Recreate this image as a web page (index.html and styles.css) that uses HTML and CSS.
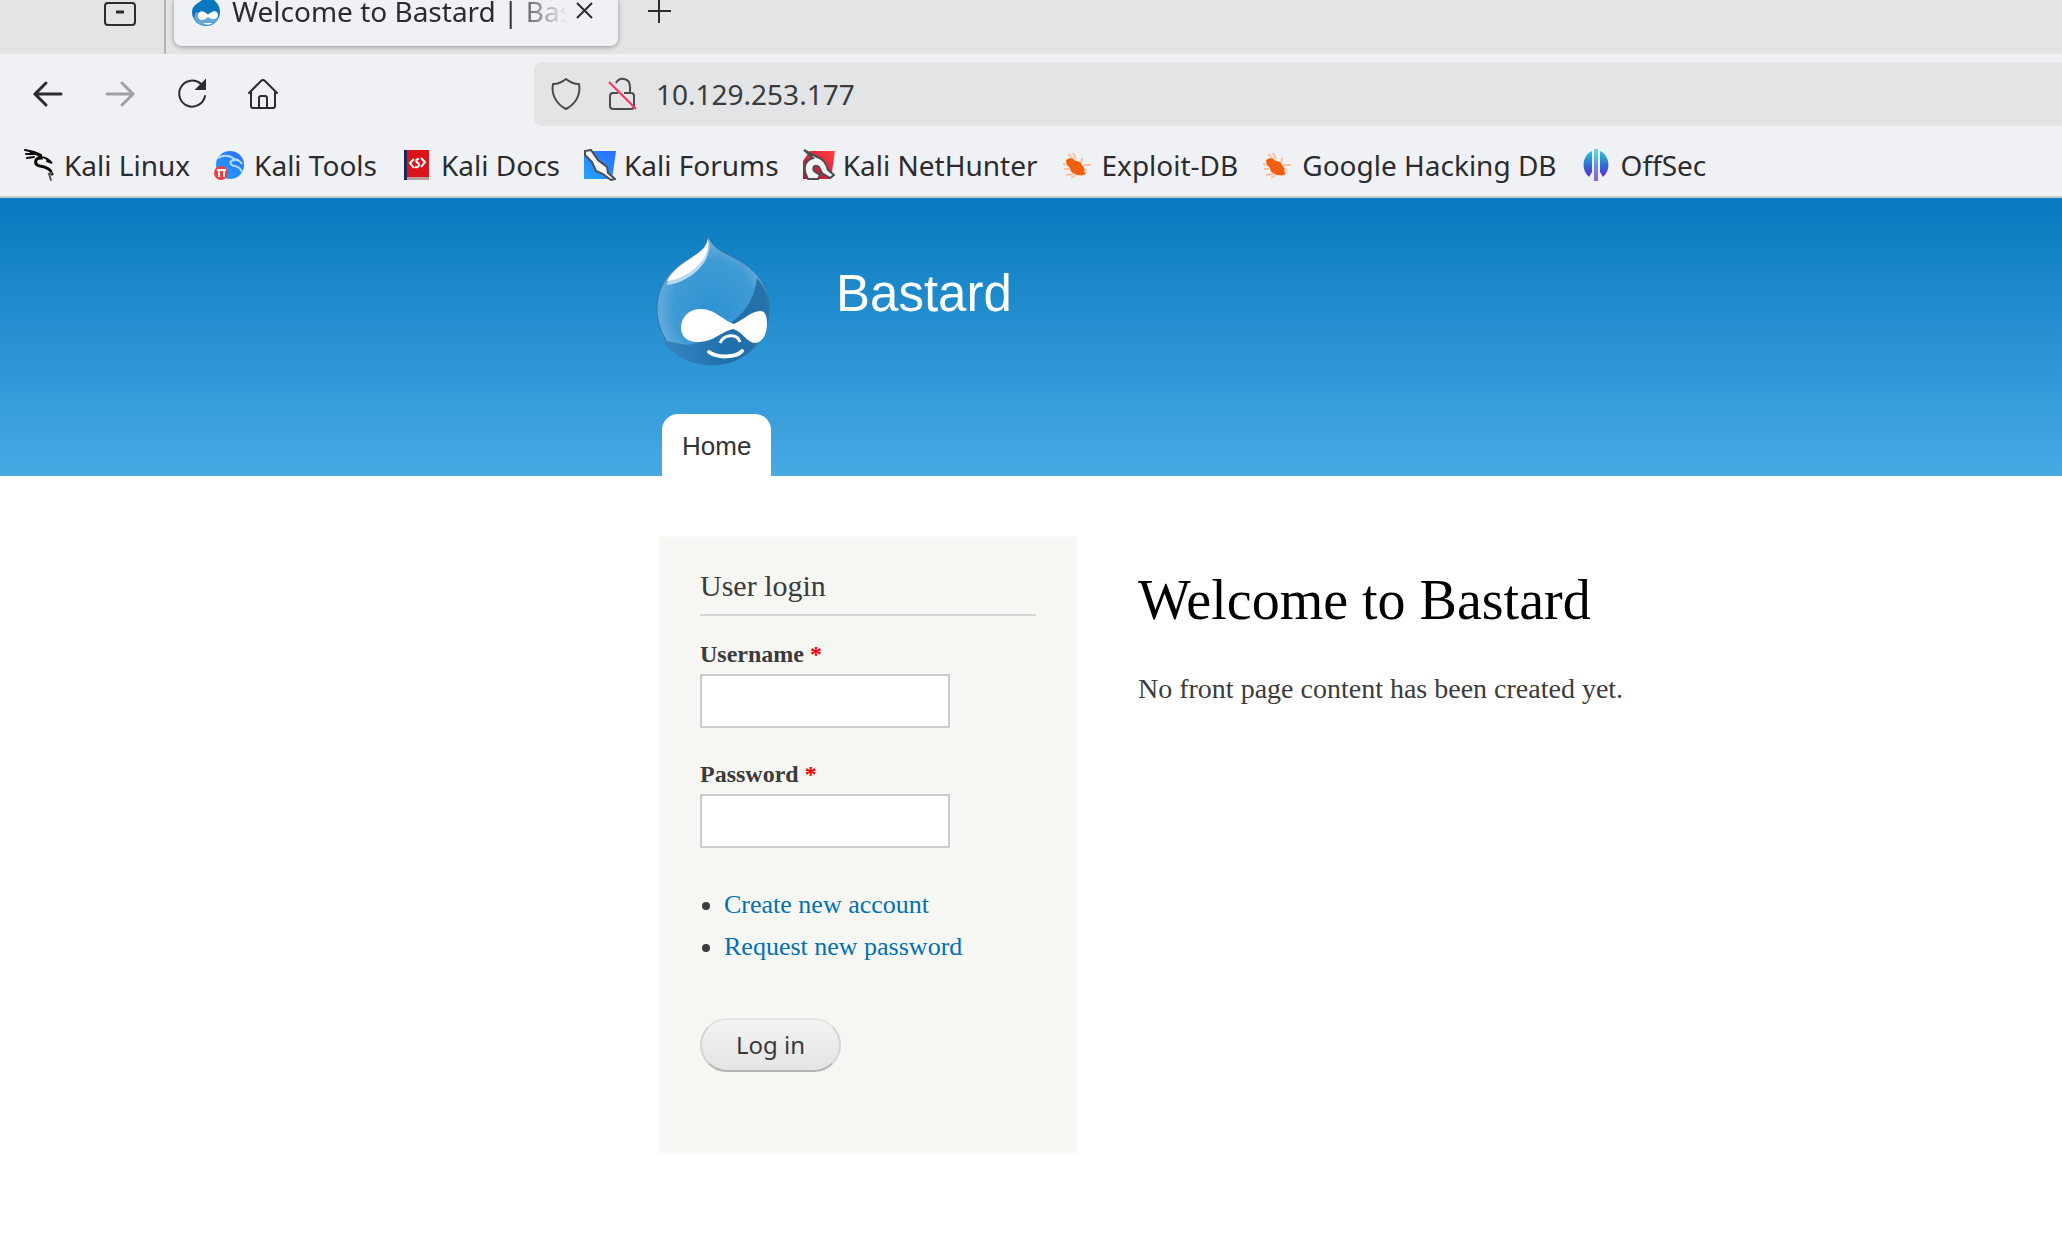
FILE: index.html
```html
<!DOCTYPE html>
<html lang="en">
<head>
<meta charset="utf-8">
<title>Welcome to Bastard | Bastard</title>
<link rel="stylesheet" href="styles.css">
</head>
<body>
<svg class="defs" aria-hidden="true">
  <defs>
    <linearGradient id="offsec" gradientUnits="userSpaceOnUse" x1="0" y1="0" x2="0" y2="32"><stop offset="0" stop-color="#25d3dc"/><stop offset=".5" stop-color="#2f6fd2"/><stop offset="1" stop-color="#6a17d6"/></linearGradient>
    <linearGradient id="blue" x1="1" y1="0" x2="0" y2="1"><stop offset="0" stop-color="#2a6cff"/><stop offset="1" stop-color="#23a4ff"/></linearGradient>
    <linearGradient id="red" x1="1" y1="0" x2="0" y2="1"><stop offset="0" stop-color="#ff4040"/><stop offset="1" stop-color="#b50d3c"/></linearGradient>
    <radialGradient id="drop" cx=".5" cy=".55" r=".55"><stop offset="0" stop-color="#2f93d3"/><stop offset=".65" stop-color="#3f9ad4"/><stop offset="1" stop-color="#72b3e0"/></radialGradient>
    <linearGradient id="shade" x1="0" y1="0" x2="1" y2="0"><stop offset="0" stop-color="#3687c2"/><stop offset=".6" stop-color="#1f6fac"/><stop offset="1" stop-color="#2872a9"/></linearGradient>
    <symbol id="bug" viewBox="0 0 32 32">
      <path d="M6 5l5 5M11 4l3 6M1 15l5 1M20 9l-1 5M29 16l-7 0M21 20l4 2M4 26l8-1M9 29l5-3M19 25l2 2M2 20l5 0" stroke="#f9c3a2" stroke-width="2" fill="none"/>
      <path d="M4 11c4-3 7-2 10 1 3 0 5 1 6 4 2 2 3 4 2 6l2 3-3 1c-3 0-5 1-8-1-3-1-5-3-5-6-2-2-4-4-4-8z" fill="#f2600f"/>
    </symbol>
  </defs>
</svg>

<div class="browser">
  <div class="tabstrip">
    <button class="icon-button archive" aria-label="Open tabs"><svg width="34" height="26" viewBox="0 0 34 26" fill="none" stroke="#2b2c30" stroke-width="2"><rect x="3" y="3" width="30" height="22" rx="3"/><path d="M14 12h8" stroke-width="3"/></svg></button>
    <div class="tab">
      <svg class="favicon" width="30" height="34" viewBox="0 0 30 34"><path d="M16 0c1 4 12 7 12 18a14 14 0 0 1-28 0C0 9 13 7 16 0z" fill="#0877bf"/><path d="M2 24c4 10 20 10 24 0l-3-7-9 4-10-3z" fill="#63a9d6"/><path d="M6 22c0-6 6-6 10-1 4-5 10-5 10 0 0 5-6 5-10 2-4 4-10 4-10-1zM11 29c4 2 7 2 9 0z" fill="#fff"/></svg>
      <span class="tab-title">Welcome to Bastard | Bastard</span>
      <button class="icon-button" aria-label="Close tab"><svg width="18" height="18" viewBox="0 0 18 18" stroke="#2b2c30" stroke-width="2"><path d="M1 1l15 15M16 1L1 16"/></svg></button>
    </div>
    <button class="icon-button new-tab" aria-label="New tab"><svg width="24" height="24" viewBox="0 0 24 24" stroke="#2b2c30" stroke-width="2"><path d="M11 0v23M0 11h23"/></svg></button>
  </div>

  <div class="toolbar">
    <div class="nav">
      <button class="icon-button" aria-label="Back"><svg width="32" height="32" viewBox="0 0 32 32" fill="none" stroke="#2b2c30" stroke-width="3" stroke-linecap="round"><path d="M14 5L3 16l11 11M3 16h26"/></svg></button>
      <button class="icon-button" aria-label="Forward" disabled><svg width="32" height="32" viewBox="0 0 32 32" fill="none" stroke="#a0a1a4" stroke-width="3" stroke-linecap="round"><path d="M18 5l11 11-11 11M29 16H3"/></svg></button>
      <button class="icon-button" aria-label="Reload"><svg width="32" height="32" viewBox="0 0 32 32" fill="none" stroke="#2b2c30" stroke-width="2" stroke-linecap="round"><path d="M25 6A13 13 0 1 0 29 18"/><path d="M29 3v8H21z" fill="#2b2c30"/></svg></button>
      <button class="icon-button" aria-label="Home"><svg width="32" height="32" viewBox="0 0 32 32" fill="none" stroke="#2b2c30" stroke-width="2" stroke-linejoin="round" stroke-linecap="round"><path d="M1 15L13 3q2-2 4 0l12 12M3 14v14q0 2 2 2h20q2 0 2-2V14M11 30V20q0-2 2-2h4q2 0 2 2v10"/></svg></button>
    </div>
    <div class="urlbar">
      <svg width="32" height="34" viewBox="0 0 32 34" fill="none" stroke="#4a4b4f" stroke-width="2" stroke-linejoin="round"><path d="M16 2q6 5 13 5c2 10-3 20-13 25C6 27 1 17 3 7q7 0 13-5z"/></svg>
      <svg width="32" height="34" viewBox="0 0 32 34" fill="none" stroke="#4a4b4f" stroke-width="2"><path d="M10 6c3-6 14-6 14 4v6M12 16H7q-3 0-3 3v10q0 3 3 3h18q3 0 3-3V19q0-3-3-3h-7"/><path d="M3 5l27 27" stroke="#ff2f5e"/></svg>
      <input class="url" type="text" value="10.129.253.177" aria-label="Address">
    </div>
  </div>

  <nav class="bookmarks" aria-label="Bookmarks">
    <a href="#"><svg class="bm" viewBox="0 0 32 32" fill="none" stroke="#0b0b0b" stroke-linecap="round"><path d="M1 1l9 2 7 3M2 5l8 0M3 9l7-1" stroke-width="2"/><path d="M7 4c5 0 9 2 10 5-7 0-7 7-1 8 7 1 11 3 12 8" stroke-width="3"/><path d="M17 8c5 0 8 3 11 6l-5-2" stroke-width="2"/><path d="M28 24l-3 1 2 6" stroke="#555" stroke-width="2"/></svg>Kali Linux</a>
    <a href="#"><svg class="bm" viewBox="0 0 32 32"><circle cx="16" cy="16" r="14" fill="url(#blue)"/><path d="M4 9c6-4 14-2 17 2-6 0-6 5 0 6 4 1 6 3 7 6M19 10c4 0 7 2 9 5" fill="none" stroke="#b8dcff" stroke-width="2"/><circle cx="7" cy="24" r="7" fill="#f83b40"/><path d="M3 21h9M5 21v7M10 21v7" stroke="#fff" stroke-width="2"/></svg>Kali Tools</a>
    <a href="#"><svg class="bm" viewBox="0 0 32 32"><path d="M3 1h25v28H3z" fill="#d9151b"/><path d="M3 1h3v30H3z" fill="#182a5b"/><path d="M6 28h22v3H6z" fill="#b69a9c"/><path d="M13 10l-4 4 4 5M20 9l4 4-4 5M18 10c-4 0-3 3-1 4s1 5-3 4" fill="none" stroke="#fff" stroke-width="2"/></svg>Kali Docs</a>
    <a href="#"><svg class="bm" viewBox="0 0 32 32"><path d="M8 2h24l-4 28H0V6z" fill="url(#blue)"/><path d="M1 2l6-1 7 10 9 7 1 6 7 6-4 1-8-6-7-3-4-9-7-7z" fill="#f4f4f4" stroke="#4b4d50" stroke-width="2"/></svg>Kali Forums</a>
    <a href="#"><svg class="bm" viewBox="0 0 32 32"><path d="M7 2h25l-4 28H0V12z" fill="url(#red)"/><path d="M1 1l13 7c7 2 9 7 11 13l6 5-4 3-8-5-3-6c-4-3-7 0-5 4l6 4-2 4H5C0 22 0 12 10 9z" fill="#f4f4f4" stroke="#4b4d50" stroke-width="2"/></svg>Kali NetHunter</a>
    <a href="#"><svg class="bm"><use href="#bug"/></svg>Exploit-DB</a>
    <a href="#"><svg class="bm"><use href="#bug"/></svg>Google Hacking DB</a>
    <a href="#"><svg class="bm" viewBox="0 0 32 32" fill="url(#offsec)"><path d="M11 2v21l-3 5C-1 20 2 6 11 2zM19 2v21l3 5C31 20 28 6 19 2z"/><path d="M13 0h4v32h-4z" fill-opacity=".7"/></svg>OffSec</a>
  </nav>
</div>

<header class="site-header">
  <div class="container">
    <div class="branding">
      <a class="logo" href="#" aria-label="Home">
        <svg width="114" height="130" viewBox="0 0 114 130">
          <path d="M52 0c4 9 9 13 19 18C94 29 113 43 113 74c0 31-25 55-56 55S1 105 1 73c0-22 11-37 28-48C41 17 50 13 52 0z" fill="url(#drop)" stroke="#36749f" stroke-width="1"/>
          <path d="M101 42c-2 17-9 32-25 44l-5 8-16 10-24 5-25-5c11 17 30 25 51 25 31 0 56-24 56-55 0-13-5-24-12-32z" fill="url(#shade)"/>
          <path d="M52 3c1 6 3 5 0 15-3 12-20 29-41 31C13 35 28 27 40 19c8-5 11-9 12-16z" fill="#b9d9ef"/>
          <path d="M52 3c0 6 1 7-2 15-5 11-20 25-39 27C16 34 31 25 41 18c7-5 10-9 11-15z" fill="#fff"/>
          <path d="M25 92c0-12 9-19 20-19 14 0 23 12 33 15 9-4 18-13 26-13 5 0 7 5 7 12 0 12-5 20-12 20-8 0-13-12-22-14-11 2-19 13-36 13-10 0-16-6-16-14z" fill="#fff"/>
          <path d="M64 107c4-9 17-10 20-1" fill="none" stroke="#fff" stroke-width="3"/>
          <path d="M53 116c8 6 27 6 33-1" fill="none" stroke="#fff" stroke-width="4" stroke-linecap="round"/>
        </svg>
      </a>
      <a class="site-name" href="#">Bastard</a>
    </div>
    <nav class="main-menu" aria-label="Main menu"><a href="#">Home</a></nav>
  </div>
</header>

<div class="container columns">
  <aside class="block">
    <h2>User login</h2>
    <form>
      <div class="field">
        <label for="name">Username <span class="required">*</span></label>
        <input id="name" type="text">
      </div>
      <div class="field">
        <label for="pass">Password <span class="required">*</span></label>
        <input id="pass" type="password">
      </div>
      <ul>
        <li><a href="#">Create new account</a></li>
        <li><a href="#">Request new password</a></li>
      </ul>
      <button class="submit" type="submit">Log in</button>
    </form>
  </aside>
  <main class="content">
    <h1>Welcome to Bastard</h1>
    <p>No front page content has been created yet.</p>
  </main>
</div>
</body>
</html>
```
FILE: styles.css
```css
* { box-sizing: border-box; }

body {
  margin: 0;
  background: #fff;
  color: #3b3b3b;
  font-family: "Liberation Serif", "Times New Roman", serif;
  overflow-x: hidden;
}

a { color: #0071b3; text-decoration: none; }

.defs { position: absolute; width: 0; height: 0; }

/* Browser chrome */
.browser {
  background: #f0f1f4;
  border-bottom: 2px solid #c4c7cb;
  color: #2b2c30;
  font-family: "Noto Sans", sans-serif;
  font-size: 28px;
}

.browser svg { display: block; flex: none; }

.icon-button {
  display: flex;
  align-items: center;
  padding: 0;
  border: 0;
  background: none;
}

.tabstrip {
  display: flex;
  align-items: flex-start;
  height: 54px;
  background: #e3e4e6;
}

.archive {
  justify-content: flex-end;
  width: 166px;
  height: 54px;
  padding: 0 28px 28px 0;
  border-right: 2px solid #b3b4b7;
}

.tab {
  display: flex;
  align-items: center;
  width: 444px;
  height: 46px;
  margin-left: 8px;
  padding: 0 24px 24px 18px;
  background: #f0f1f4;
  border-radius: 0 0 8px 8px;
  box-shadow: 0 1px 5px rgba(0, 0, 0, 0.35);
}

.tab-title {
  flex: 1;
  min-width: 0;
  margin: 0 8px 0 10px;
  overflow: hidden;
  line-height: 40px;
  white-space: nowrap;
  mask-image: linear-gradient(to right, #000 82%, transparent 100%);
}

.new-tab { margin-left: 30px; }

.toolbar { display: flex; align-items: center; height: 80px; }

.nav { display: flex; gap: 40px; width: 534px; padding-left: 32px; }

.urlbar {
  display: flex;
  flex: 1;
  align-items: center;
  gap: 24px;
  height: 64px;
  padding-left: 16px;
  background: #e3e4e6;
  border-radius: 8px 0 0 8px;
}

.url {
  flex: 1;
  padding: 0;
  margin-left: -6px;
  border: 0;
  background: none;
  color: #3a3b3f;
  font: inherit;
}

.bookmarks {
  display: flex;
  align-items: center;
  gap: 24px;
  height: 62px;
  padding-left: 24px;
}

.bookmarks a {
  display: flex;
  align-items: center;
  gap: 8px;
  color: inherit;
  white-space: nowrap;
}

.bm { width: 32px; height: 32px; }

/* Site */
.container { width: 100%; max-width: 1404px; margin-left: auto; }

.site-header { background: linear-gradient(#0779bf, #48a9e4); }

.branding { display: flex; margin-left: -2px; padding-top: 38px; }

.logo svg { display: block; }

.site-name {
  margin: 28px 0 0 66px;
  color: #fff;
  font: 51px/60px "Liberation Sans", Arial, sans-serif;
}

.main-menu { display: flex; padding: 48px 4px 0; }

.main-menu a {
  padding: 2px 20px 0;
  border-radius: 16px 16px 0 0;
  background: #fff;
  color: #333;
  font: 26px/60px "Liberation Sans", Arial, sans-serif;
}

.columns { display: flex; align-items: flex-start; gap: 60px; padding-top: 60px; }

.block {
  width: 420px;
  padding: 30px 40px 80px;
  border: 2px solid #f9f9f9;
  background: #f6f6f2;
}

.block h2 {
  margin: 0 0 24px;
  padding-bottom: 10px;
  border-bottom: 2px solid #d6d6d6;
  font-size: 30px;
  font-weight: normal;
  line-height: 36px;
}

.field { margin-bottom: 32px; }

.field label {
  display: block;
  margin-bottom: 6px;
  font-size: 24px;
  font-weight: bold;
  line-height: 28px;
}

.required { color: #f00; }

.field input {
  display: block;
  width: 250px;
  height: 54px;
  border: 2px solid #ccc;
  background: #fff;
}

.block ul {
  margin: 36px 0 50px;
  padding-left: 24px;
  font-size: 26px;
  line-height: 42px;
}

.submit {
  display: block;
  height: 54px;
  padding: 0 34px;
  border: 2px solid #d4d4d4;
  border-top-color: #e4e4e4;
  border-bottom-color: #b4b4b4;
  border-radius: 27px;
  background: linear-gradient(#f3f3f3, #e4e4e4);
  color: #3a3a3a;
  font: 24px/30px "Noto Sans", sans-serif;
}

.content h1 {
  margin: 32px 0 36px;
  color: #000;
  font-size: 56px;
  font-weight: normal;
  line-height: 64px;
}

.content p { margin: 0; font-size: 28px; line-height: 42px; }
```
